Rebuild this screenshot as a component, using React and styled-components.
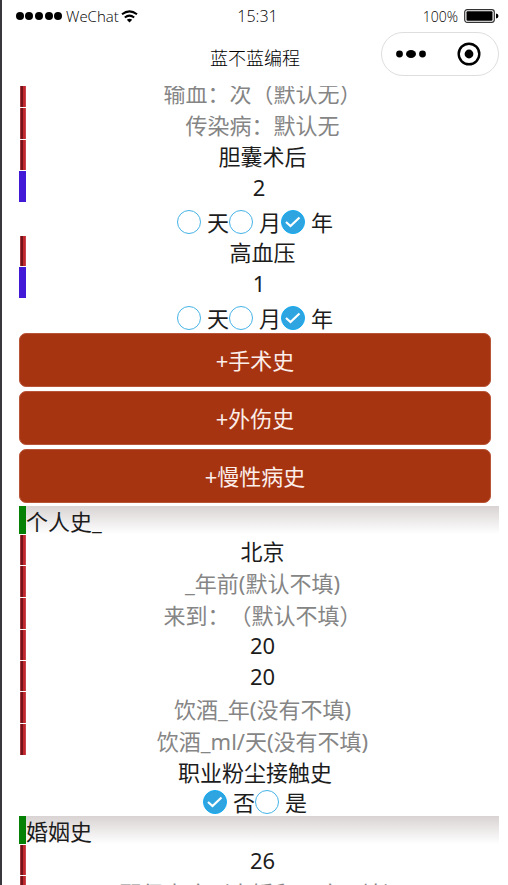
import React from "react";
import styled, { createGlobalStyle } from "styled-components";

const GlobalStyle = createGlobalStyle`
  * { box-sizing: border-box; }
  body {
    margin: 0;
    background: #fff;
    color: #1c1c1c;
    font-family: "Noto Sans", "Noto Sans CJK SC", sans-serif;
    font-size: 22px;
    text-spacing-trim: space-all;
  }
  button, input { font: inherit; color: inherit; text-spacing-trim: space-all; }
`;

const Phone = styled.div`
  display: flex;
  flex-direction: column;
  height: 100vh;
  overflow: hidden;
  border-left: 2px solid #38383c;
`;

const StatusBar = styled.header`
  display: grid;
  grid-template-columns: 1fr auto 1fr;
  align-items: center;
  height: 32px;
  padding: 0 9px 0 14px;
  font-family: "Open Sans", "Noto Sans", sans-serif;
  font-size: 15px;
  font-weight: 300;
  color: #000;
`;

const Carrier = styled.div`
  display: flex;
  align-items: center;
  gap: 4px;
`;

const CarrierName = styled.span`
  display: flex;
  align-items: center;
  gap: 2px;
`;

const Clock = styled.time`
  font-size: 16px;
`;

const Power = styled.div`
  display: flex;
  align-items: center;
  justify-content: flex-end;
  gap: 6px;
  font-size: 14px;
`;

const NavBar = styled.div`
  display: grid;
  grid-template-columns: 1fr auto 1fr;
  align-items: center;
  flex: none;
  height: 54px;
  padding: 0 9px 10px;
`;

const Title = styled.h1`
  grid-column: 2;
  margin: 0;
  padding-top: 8px;
  font-size: 18px;
  font-weight: 300;
  line-height: 26px;
  color: #000;
`;

const Capsule = styled.div`
  justify-self: end;
  display: flex;
  width: 118px;
  height: 44px;
  border: 1px solid #dedede;
  border-radius: 22px;
`;

const CapsuleButton = styled.button`
  display: flex;
  flex: 1;
  align-items: center;
  justify-content: center;
  padding: 0;
  border: 0;
  background: none;
`;

const Viewport = styled.main`
  flex: 1;
  min-height: 0;
  overflow: hidden;
  padding: 0 9px 0 17px;
`;

const Form = styled.form`
  display: flex;
  flex-direction: column;
  margin-top: -10px;
`;

const FieldRow = styled.div`
  display: flex;
  flex: none;
  height: ${(p) => (p.$filled ? 31 : 32)}px;
  padding: 0 0 1px 1px;

  &::before {
    content: "";
    flex: none;
    width: 6px;
    background: linear-gradient(90deg, #a8353c 0 1px, #73131a 1px 3px, #c1272d 3px 5px, #c8454b 5px);
  }
`;

const DurationRow = styled.div`
  flex: none;
  height: 31px;
  margin-bottom: 6px;
  background: linear-gradient(#4319d8, #4319d8) left / 7px 100% no-repeat;
  display: flex;
`;

const TextInput = styled.input`
  flex: 1;
  min-width: 0;
  padding: 0;
  border: 0;
  outline: 0;
  background: none;
  text-align: center;

  &:placeholder-shown {
    padding-top: 2px;
  }

  &::placeholder {
    color: #858585;
    opacity: 1;
  }
`;

const Caption = styled.div`
  flex: none;
  height: 32px;
  margin-right: 8px;
  line-height: 32px;
  text-align: center;
`;

const RadioRow = styled.div`
  display: flex;
  flex: none;
  align-items: center;
  justify-content: center;
  height: 28px;
  margin-right: 8px;
`;

const RadioLabel = styled.label`
  display: flex;
  align-items: center;
  gap: 7px;
  line-height: 28px;
`;

const RadioBox = styled.span`
  display: grid;
  width: 24px;
  height: 24px;
  margin-right: -1px;

  & > * { grid-area: 1 / 1; }
  svg { pointer-events: none; visibility: hidden; }
  input:checked + svg { visibility: visible; }
`;

const RadioInput = styled.input`
  appearance: none;
  width: 24px;
  height: 24px;
  margin: 0;
  border: 1px solid #45b3e8;
  border-radius: 50%;

  &:checked {
    border-color: #14aaf0;
    background: #2ea5e1;
  }
`;

const AddButtons = styled.div`
  display: flex;
  flex-direction: column;
  gap: 4px;
  margin: 1px 8px 3px 0;
`;

const AddButton = styled.button`
  height: 54px;
  padding: 0 0 2px;
  border: 1px solid #b85437;
  border-radius: 7px;
  background: #a63411;
  color: #fbeeea;
`;

const SectionTitle = styled.h2`
  flex: none;
  height: 29px;
  margin: 0;
  padding-left: 7px;
  font-size: 22px;
  font-weight: 400;
  line-height: 31px;
  background:
    linear-gradient(#058205, #058205) left top / 7px 28px no-repeat,
    linear-gradient(#d9d3d3, #fff 28px);
`;

function Signal() {
  return (
    <svg width="46" height="10" viewBox="0 0 46 10" aria-hidden="true">
      {[4, 13, 23, 33, 42].map((x) => (
        <circle key={x} cx={x} cy="5" r="4" />
      ))}
    </svg>
  );
}

function Wifi() {
  return (
    <svg width="17" height="13" viewBox="0 0 17 13" aria-hidden="true">
      <g fill="none" stroke="#000" strokeWidth="2">
        <path d="M1 4.3Q8.5-1.6 16 4.3" />
        <path d="M3.8 7.5Q8.5 3.7 13.2 7.5" />
      </g>
      <path d="M5.8 9.8Q8.5 7.6 11.2 9.8L8.5 12.5Z" />
    </svg>
  );
}

function Battery() {
  return (
    <svg width="35" height="14" viewBox="0 0 35 14" aria-hidden="true">
      <rect x=".7" y=".7" width="29.6" height="12.6" rx="2.5" fill="#fff" stroke="#333" strokeWidth="1.2" />
      <rect x="2.5" y="2.3" width="26" height="9.4" rx="1" />
      <path d="M32 4.5Q34.5 4.8 34.5 7T32 9.5Z" />
    </svg>
  );
}

function MoreIcon() {
  return (
    <svg width="32" height="12" viewBox="0 0 32 12" aria-hidden="true">
      <circle cx="4.5" cy="6" r="3.4" />
      <ellipse cx="16" cy="6" rx="5" ry="4" />
      <circle cx="27.5" cy="6" r="3.4" />
    </svg>
  );
}

function TargetIcon() {
  return (
    <svg width="24" height="24" viewBox="0 0 24 24" aria-hidden="true">
      <circle cx="12" cy="12" r="10.3" fill="none" stroke="#000" strokeWidth="2.4" />
      <circle cx="12" cy="12" r="4.4" />
    </svg>
  );
}

function Field({ label, value, placeholder }) {
  return (
    <FieldRow $filled={Boolean(value)}>
      <TextInput aria-label={label || placeholder} defaultValue={value} placeholder={placeholder} />
    </FieldRow>
  );
}

function Duration({ label, value }) {
  return (
    <DurationRow>
      <TextInput aria-label={label} defaultValue={value} />
    </DurationRow>
  );
}

function Radios({ name, options, selected }) {
  return (
    <RadioRow role="radiogroup" aria-label={name}>
      {options.map((option) => (
        <RadioLabel key={option}>
          <RadioBox>
            <RadioInput type="radio" name={name} value={option} defaultChecked={option === selected} />
            <svg width="24" height="24" viewBox="0 0 24 24" aria-hidden="true">
              <path d="M5 12L9.5 16L18.5 7.5" fill="none" stroke="#fff" strokeWidth="2.2" />
            </svg>
          </RadioBox>
          {option}
        </RadioLabel>
      ))}
    </RadioRow>
  );
}

const units = ["天", "月", "年"];

export default function App() {
  return (
    <Phone>
      <GlobalStyle />
      <StatusBar>
        <Carrier>
          <Signal />
          <CarrierName>WeChat<Wifi /></CarrierName>
        </Carrier>
        <Clock>15:31</Clock>
        <Power>100%<Battery /></Power>
      </StatusBar>
      <NavBar>
        <Title>蓝不蓝编程</Title>
        <Capsule>
          <CapsuleButton type="button" aria-label="更多"><MoreIcon /></CapsuleButton>
          <CapsuleButton type="button" aria-label="关闭"><TargetIcon /></CapsuleButton>
        </Capsule>
      </NavBar>
      <Viewport>
        <Form>
          <Field placeholder="输血：次（默认无）" />
          <Field placeholder="传染病：默认无" />
          <Field label="手术史" value="胆囊术后" />
          <Duration label="手术时间" value="2" />
          <Radios name="手术时间单位" options={units} selected="年" />
          <Field label="慢性病史" value="高血压" />
          <Duration label="患病时间" value="1" />
          <Radios name="患病时间单位" options={units} selected="年" />
          <AddButtons>
            <AddButton type="button">+手术史</AddButton>
            <AddButton type="button">+外伤史</AddButton>
            <AddButton type="button">+慢性病史</AddButton>
          </AddButtons>
          <SectionTitle>个人史_</SectionTitle>
          <Field label="出生地" value="北京" />
          <Field placeholder="_年前(默认不填)" />
          <Field placeholder="来到：（默认不填）" />
          <Field label="吸烟_年" value="20" />
          <Field label="吸烟_支/天" value="20" />
          <Field placeholder="饮酒_年(没有不填)" />
          <Field placeholder="饮酒_ml/天(没有不填)" />
          <Caption>职业粉尘接触史</Caption>
          <Radios name="职业粉尘接触史" options={["否", "是"]} selected="否" />
          <SectionTitle>婚姻史</SectionTitle>
          <Field label="结婚年龄" value="26" />
          <Field placeholder="配偶患病（未婚和无病不填）" />
        </Form>
      </Viewport>
    </Phone>
  );
}
